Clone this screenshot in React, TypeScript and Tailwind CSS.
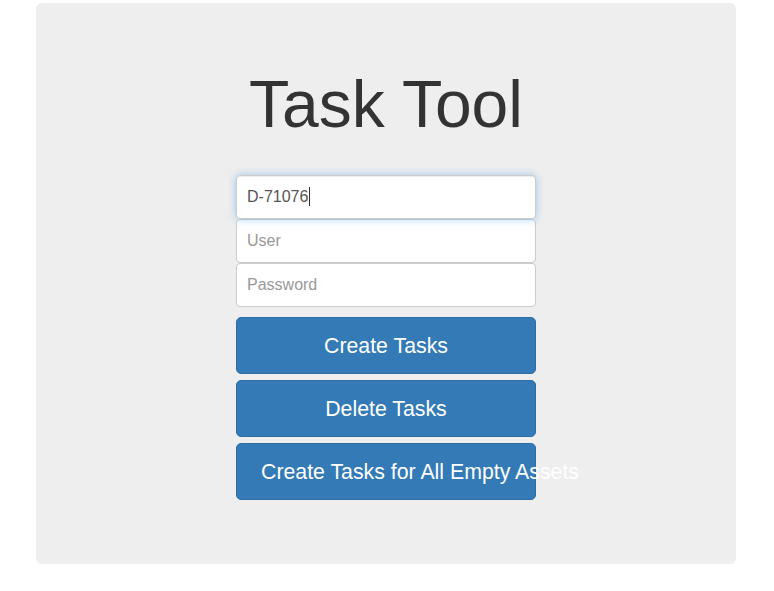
import React from 'react';

const inputBase =
  'block w-[300px] h-[44px] px-[10px] text-[16px] text-[#555] bg-white border border-[#ccc] rounded-[4px] outline-none placeholder:text-[#999]';

const buttonBase =
  'block w-[300px] h-[57px] pt-[3px] text-[21.3px] text-white bg-[#337ab7] border border-[#2e6da4] rounded-[5px] whitespace-nowrap overflow-visible';

export default function App() {
  return (
    <div className="min-h-[591px] bg-white pt-[3px]" style={{ fontFamily: '"Liberation Sans", Arial, sans-serif' }}>
      <div className="ml-[36px] w-[700px] h-[561px] bg-[#eeeeee] rounded-[6px] pt-[65px] flex flex-col items-center">
        <h1 className="text-[66px] leading-[1.1] text-[#333] font-normal">Task Tool</h1>

        <form className="mt-[34px] flex flex-col" onSubmit={(e) => e.preventDefault()}>
          <div className="relative">
            <input
              className={`${inputBase} border-[#66afe9] shadow-[inset_0_1px_1px_rgba(0,0,0,0.075),0_0_8px_rgba(102,175,233,0.6)]`}
              defaultValue="D-71076"
              readOnly
            />
            {/* caret */}
            <span className="absolute left-[73px] top-[12px] w-px h-[19px] bg-[#333]" />
          </div>
          <input className={inputBase} placeholder="User" />
          <input className={inputBase} type="password" placeholder="Password" />

          <div className="mt-[10px] flex flex-col gap-[6px]">
            <button type="button" className={`${buttonBase} text-center`}>Create Tasks</button>
            <button type="button" className={`${buttonBase} text-center`}>Delete Tasks</button>
            <button type="button" className={`${buttonBase} text-left pl-[24px]`}>
              Create Tasks for All Empty Assets
            </button>
          </div>
        </form>
      </div>
    </div>
  );
}
